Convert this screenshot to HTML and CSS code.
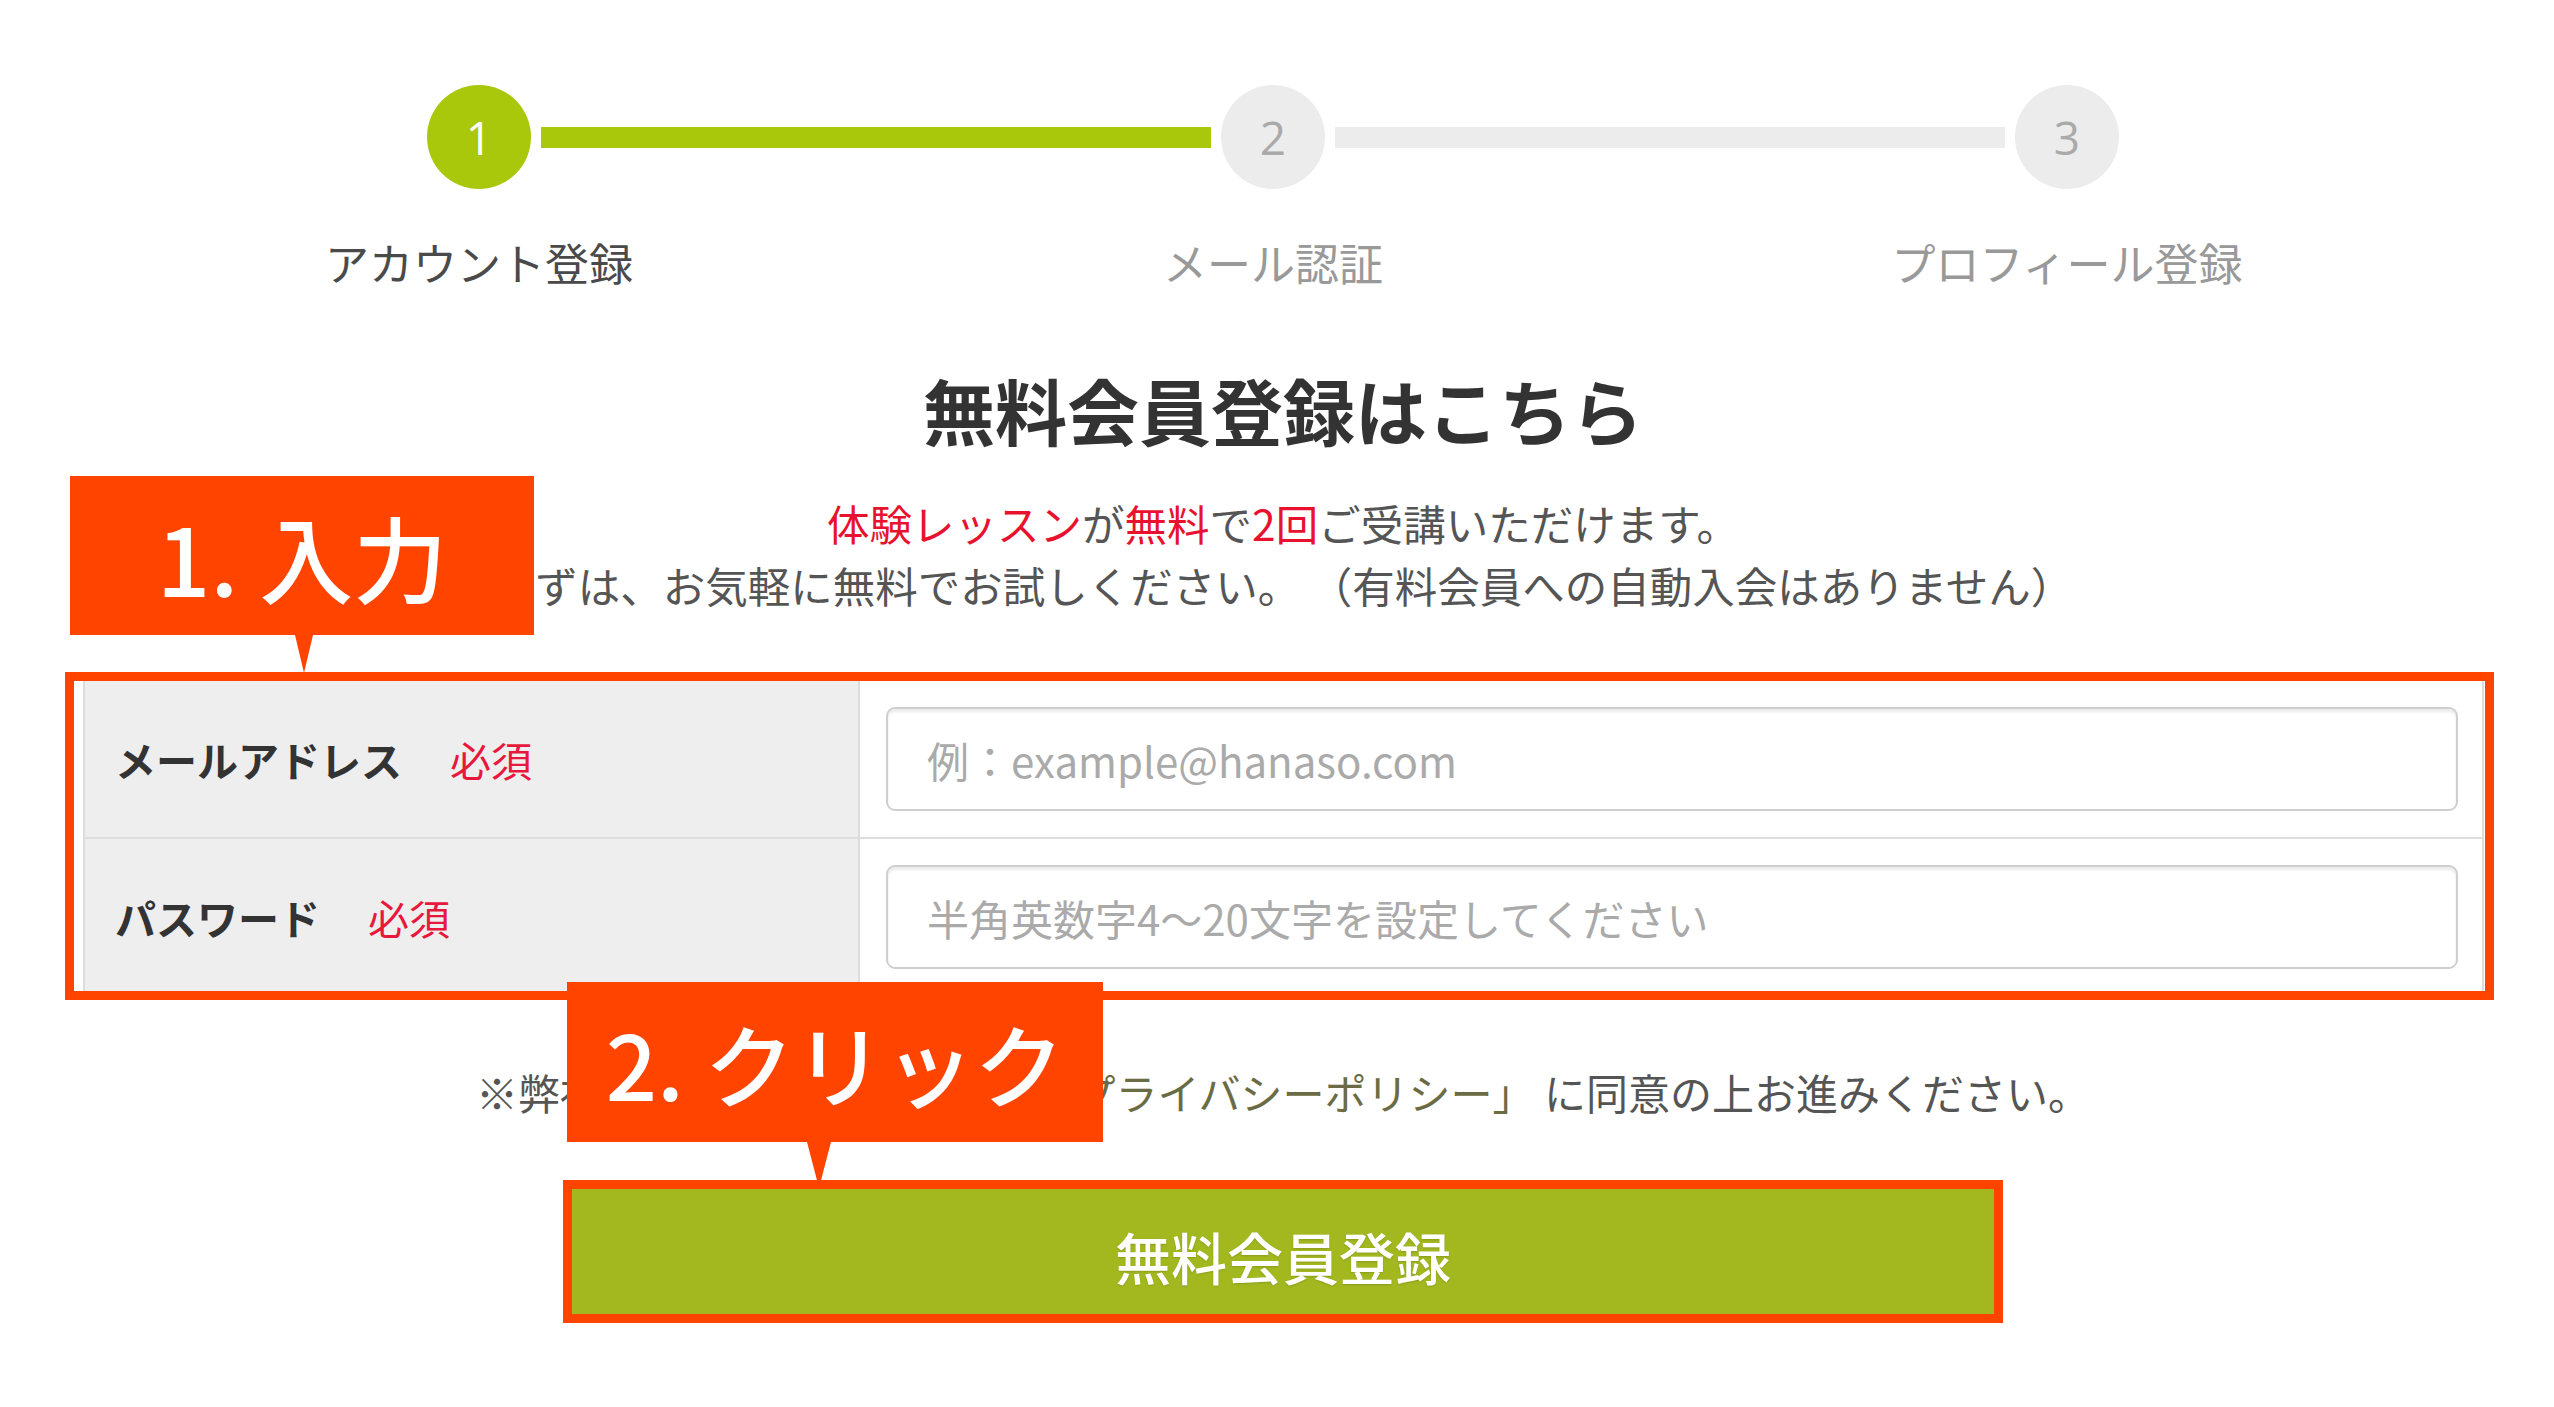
FILE: index.html
```html
<!DOCTYPE html>
<html lang="ja">
<head>
<meta charset="utf-8">
<title>無料会員登録</title>
<link rel="stylesheet" href="styles.css">
</head>
<body>
<div class="page">
  <div class="stepper">
    <div class="step-circle is-active">1</div>
    <div class="step-bar is-done"></div>
    <div class="step-circle">2</div>
    <div class="step-bar"></div>
    <div class="step-circle">3</div>
    <div class="step-label is-active col1">アカウント登録</div>
    <div class="step-label col3">メール認証</div>
    <div class="step-label col5">プロフィール登録</div>
  </div>

  <h1 class="title">無料会員登録はこちら</h1>

  <div class="intro">
    <p><span class="red">体験レッスン</span>が<span class="red">無料</span>で<span class="red">2回</span>ご受講いただけます。</p>
    <p>まずは、お気軽に無料でお試しください。 （有料会員への自動入会はありません）</p>
  </div>

  <div class="form-table">
    <div class="row">
      <div class="label-cell">メールアドレス<span class="req">必須</span></div>
      <div class="input-cell"><input class="field" type="text" placeholder="例：example@hanaso.com"></div>
    </div>
    <div class="row">
      <div class="label-cell">パスワード<span class="req">必須</span></div>
      <div class="input-cell"><input class="field" type="password" placeholder="半角英数字4〜20文字を設定してください"></div>
    </div>
  </div>

  <p class="note">※弊社の<span class="link">「利用規約」</span>および <span class="link">「プライバシーポリシー」</span> に同意の上お進みください。</p>

  <div class="btn-hl">
    <button class="submit" type="button">無料会員登録</button>
  </div>

  <div class="hl-box"></div>
  <div class="badge badge-1">1. 入力</div>
  <div class="badge badge-2">2. クリック</div>
</div>
</body>
</html>
```

FILE: styles.css
```css
* { box-sizing: border-box; }
html, body { margin: 0; padding: 0; background: #fff; }
body {
  font-family: "Noto Sans CJK JP", "Noto Sans", sans-serif;
  color: #555;
}
.page {
  position: relative;
  width: 2554px;
  min-height: 1407px;
  padding: 85px 0 0 12px;
}

/* stepper */
.stepper {
  width: 1692px;
  margin-left: 415px;
  display: grid;
  grid-template-columns: 104px 1fr 104px 1fr 104px;
  grid-template-rows: 104px auto;
  column-gap: 10px;
  align-items: center;
}
.step-circle {
  width: 104px;
  height: 104px;
  border-radius: 50%;
  background: #ececec;
  color: #aaa;
  font-family: "Open Sans", "Noto Sans", sans-serif;
  font-size: 46px;
  display: flex;
  align-items: center;
  justify-content: center;
}
.step-circle.is-active { background: #a9c80b; color: #fff; }
.step-bar { height: 21px; background: #ececec; }
.step-bar.is-done { background: #a9c80b; }
.step-label {
  grid-row: 2;
  justify-self: center;
  white-space: nowrap;
  margin-top: 40px;
  font-size: 44px;
  line-height: 66px;
  color: #999;
}
.step-label.is-active { color: #4a4a4a; }
.col1 { grid-column: 1; }
.col3 { grid-column: 3; }
.col5 { grid-column: 5; }

/* heading */
.title {
  margin: 64px 0 0;
  text-align: center;
  font-size: 72px;
  line-height: 99px;
  font-weight: 700;
  color: #333;
}
.intro {
  margin-top: 34px;
  text-align: center;
  font-size: 42.5px;
  line-height: 62px;
  color: #555;
}
.intro p { margin: 0; }
.red { color: #e8122f; }

/* form */
.form-table {
  margin: 65px 0 0 71px;
  width: 2401px;
  border-left: 2px solid #ddd;
  border-right: 2px solid #ddd;
}
.row {
  display: grid;
  grid-template-columns: 775px 1fr;
  border-bottom: 2px solid #ddd;
}
.row:first-child { min-height: 158px; }
.label-cell {
  background: #eee;
  border-right: 2px solid #ddd;
  display: flex;
  align-items: center;
  padding-left: 30px;
  font-size: 41px;
  font-weight: 700;
  color: #333;
}
.req {
  margin-left: 48px;
  font-weight: 400;
  color: #e8173c;
}
.input-cell {
  padding: 26px 24px 25px 26px;
}
.field {
  display: block;
  width: 100%;
  height: 104px;
  border: 2px solid #cfcfcf;
  border-radius: 9px;
  box-shadow: inset 0 3px 3px rgba(0,0,0,0.08);
  padding: 0 0 0 39px;
  font-family: "Noto Sans CJK JP", "Noto Sans", sans-serif;
  font-size: 42px;
  color: #333;
  background: #fff;
  outline: none;
}
.field::placeholder { color: #aaa; }

.note {
  margin: 66px 0 0;
  text-align: center;
  font-size: 42px;
  line-height: 60px;
  color: #555;
}
.link { color: #6b6b45; }

/* button */
.btn-hl {
  margin: 58px 0 0 551px;
  width: 1440px;
  border: 9px solid #ff4400;
}
.submit {
  display: block;
  width: 100%;
  height: 125px;
  border: none;
  background: #a3b81f;
  color: #fff;
  font-family: "Noto Sans CJK JP", "Noto Sans", sans-serif;
  font-size: 56px;
  font-weight: 500;
  padding: 0;
  padding-top: 8px;
  text-shadow: 0 1px 2px rgba(0,0,0,0.15);
}

/* annotations */
.hl-box {
  position: absolute;
  left: 65px;
  top: 672px;
  width: 2429px;
  height: 328px;
  border: 9px solid #ff4400;
}
.badge {
  position: absolute;
  background: #ff4400;
  color: #fff;
  font-family: "Noto Sans CJK JP", "Noto Sans", sans-serif;
  font-weight: 500;
  display: flex;
  align-items: center;
  justify-content: center;
  white-space: nowrap;
  line-height: 1;
}
.badge::after {
  content: "";
  position: absolute;
  top: 100%;
  width: 0;
  height: 0;
  border-style: solid;
  border-color: #ff4400 transparent transparent transparent;
}
.badge-1 {
  left: 70px;
  top: 476px;
  width: 464px;
  height: 159px;
  font-size: 94px;
}
.badge-1::after {
  left: 225px;
  border-width: 38px 9px 0 9px;
}
.badge-2 {
  left: 567px;
  top: 982px;
  width: 536px;
  height: 160px;
  font-size: 90px;
}
.badge-2::after {
  left: 240px;
  border-width: 46px 12px 0 12px;
}
```
